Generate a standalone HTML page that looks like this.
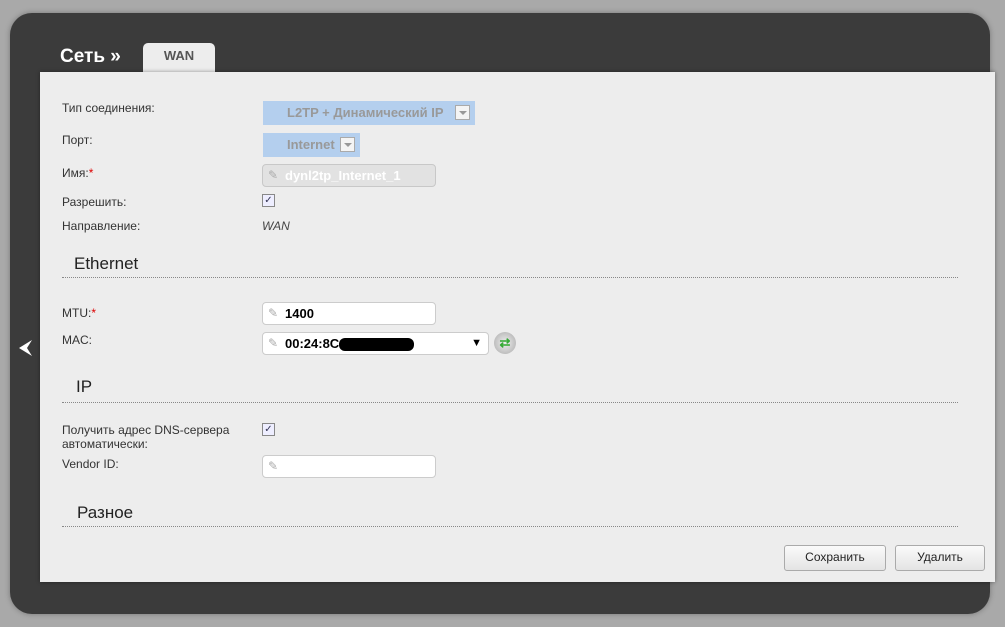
<!DOCTYPE html>
<html><head><meta charset="utf-8"><style>
body{margin:0;width:1005px;height:627px;background:#a9a9a9;font-family:"Liberation Sans",sans-serif;position:relative;overflow:hidden}
.dark{position:absolute;left:10px;top:13px;width:980px;height:601px;background:#3b3b3b;border-radius:22px;box-shadow:0 0 6px rgba(0,0,0,.3)}
.light{position:absolute;left:40px;top:72px;width:955px;height:510px;background:#ededed;box-shadow:0 0 4px rgba(0,0,0,.4)}
.title{position:absolute;left:60px;top:46px;color:#fff;font-weight:bold;font-size:19px}
.tab{position:absolute;left:143px;top:43px;width:72px;height:30px;background:#ededed;border-radius:5px 5px 0 0;text-align:center;font-weight:bold;font-size:13px;color:#555;line-height:26px}
.l{position:absolute;left:62px;font-size:12px;color:#333}
.sel{position:absolute;left:263px;background:#b4cfee;color:#999;font-weight:bold;font-size:13px;height:24px;line-height:24px}
.dd{position:absolute;top:4px;width:15px;height:15px;background:#f4f4f4;border:1px solid #aaa;box-sizing:border-box}
.dd:after{content:"";position:absolute;left:3px;top:5px;border:4px solid transparent;border-top:4px solid #999}
.inp{position:absolute;left:262px;width:174px;height:23px;background:#fff;border:1px solid #ccc;border-radius:4px;box-sizing:border-box;font-size:13px;font-weight:bold;line-height:21px;padding-left:22px}
.inp:before{content:"✎";position:absolute;left:5px;top:0;color:#aaa;font-weight:normal;font-size:12px}
.cb{position:absolute;left:262px;width:11px;height:11px;border:1px solid #888;background:#eef;font-size:10px;line-height:11px;text-align:center;color:#335}
.h{position:absolute;font-size:17px;color:#222}
.hr{position:absolute;left:62px;width:896px;border-top:1px dotted #888}
.btn{position:absolute;top:545px;height:24px;border:1px solid #aaa;border-radius:3px;background:linear-gradient(#fafafa,#e4e4e4);font-size:12px;color:#222;text-align:center;line-height:23px}
</style></head><body>
<div class="dark"></div>
<div class="title">Сеть »</div>
<div class="tab">WAN</div>
<svg style="position:absolute;left:18px;top:339px" width="16" height="18" viewBox="0 0 16 18"><path d="M14 1 L1 9 L14 17 L9 9 Z" fill="#fff"/></svg>
<div class="light"></div>
<div class="l" style="top:101px">Тип соединения:</div>
<div class="sel" style="top:101px;width:212px"><span style="margin-left:24px">L2TP + Динамический IP</span><div class="dd" style="left:192px"></div></div>
<div class="l" style="top:133px">Порт:</div>
<div class="sel" style="top:133px;width:97px"><span style="margin-left:24px">Internet</span><div class="dd" style="left:77px"></div></div>
<div class="l" style="top:166px">Имя:<span style="color:#d00">*</span></div>
<div class="inp" style="top:164px;background:#e2e2e2;color:#fff;border-color:#c8c8c8">dynl2tp_Internet_1</div>
<div class="l" style="top:195px">Разрешить:</div>
<div class="cb" style="top:194px">✓</div>
<div class="l" style="top:219px">Направление:</div>
<div style="position:absolute;left:262px;top:219px;font-size:12px;font-style:italic;color:#444">WAN</div>
<div class="h" style="left:74px;top:254px">Ethernet</div>
<div class="hr" style="top:277px"></div>
<div class="l" style="top:306px">MTU:<span style="color:#d00">*</span></div>
<div class="inp" style="top:302px">1400</div>
<div class="l" style="top:333px">MAC:</div>
<div class="inp" style="top:332px;width:227px">00:24:8C<span style="display:inline-block;width:75px;height:13px;background:#000;border-radius:6px;vertical-align:middle"></span><span style="position:absolute;right:6px;font-size:11px">▼</span></div>
<div style="position:absolute;left:494px;top:332px;width:22px;height:22px;border-radius:50%;background:radial-gradient(#eee,#aaa);color:#3a3;font-size:13px;text-align:center;line-height:22px;font-weight:bold">⇄</div>
<div class="h" style="left:76px;top:377px">IP</div>
<div class="hr" style="top:402px"></div>
<div class="l" style="top:423px;line-height:14px">Получить адрес DNS-сервера<br>автоматически:</div>
<div class="cb" style="top:423px">✓</div>
<div class="l" style="top:457px">Vendor ID:</div>
<div class="inp" style="top:455px"></div>
<div class="h" style="left:77px;top:503px">Разное</div>
<div class="hr" style="top:526px"></div>
<div class="btn" style="left:784px;width:100px">Сохранить</div>
<div class="btn" style="left:895px;width:88px">Удалить</div>
</body></html>
